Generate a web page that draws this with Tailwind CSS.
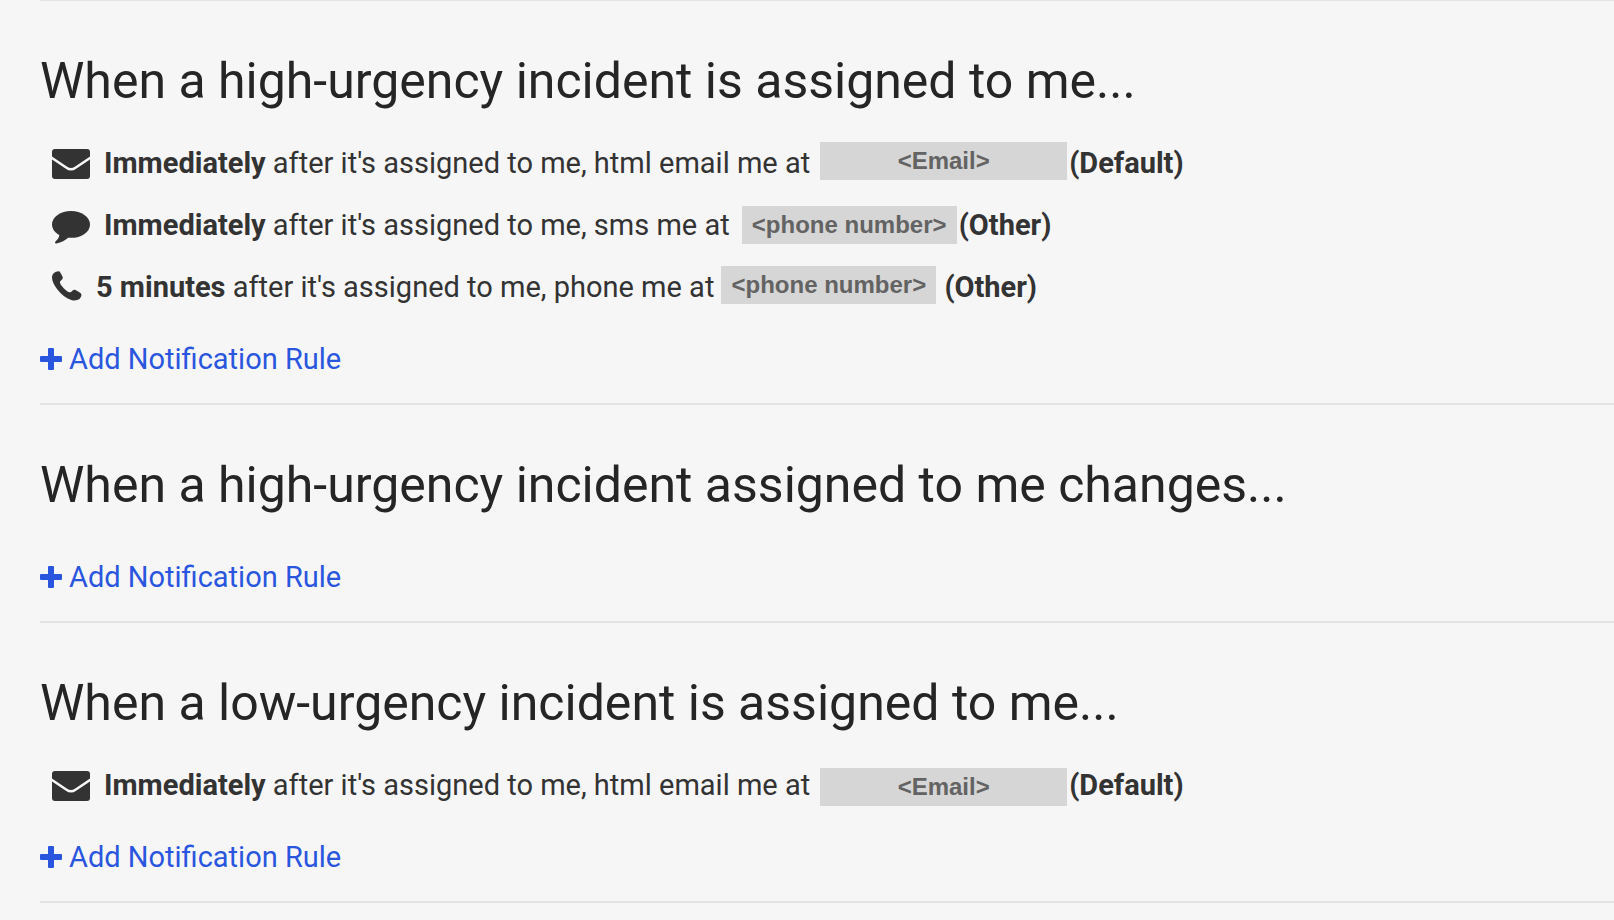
<!DOCTYPE html>
<html lang="en">
<head>
<meta charset="utf-8">
<meta name="viewport" content="width=device-width, initial-scale=1">
<title>Notification Rules</title>
<script src="https://cdn.jsdelivr.net/npm/@tailwindcss/browser@4"></script>
</head>
<body class="bg-[#f6f6f6] font-['Roboto',sans-serif] text-[29px] text-[#333333]">
<svg class="hidden" aria-hidden="true">
  <symbol id="envelope" viewBox="0 0 38 30">
    <rect width="38" height="30" rx="3" fill="currentColor"/>
    <path d="M-2 7.600 14.500 18.700Q19 22 23.500 18.700L40 7.600" fill="none" stroke="#f6f6f6" stroke-width="2.400"/>
  </symbol>
  <symbol id="comment" viewBox="0 0 38 33">
    <ellipse cx="19" cy="13.4" rx="19" ry="13.4" fill="currentColor"/>
    <path d="M7.5 23.5C7.2 26.8 5.200 29 3.300 30.800C2.700 31.800 3.200 32.600 4.300 32.400C9.500 31.500 13 29.300 16.500 26.500Z" fill="currentColor"/>
  </symbol>
  <symbol id="phone" viewBox="0 0 30 30">
    <path d="M1.500 2.500C3 .8 5.500 0 7.300.2C8.500 1.500 10 4.500 10.800 6.200C11 7.500 10 8.600 8 10.500C7.500 12 9 14.500 12 17.500C15 20.500 17.500 21.700 18.500 21.300C20.500 20 21 18.500 23 18.800C25.500 20 28 21.500 29.300 23C29.800 24.500 28.800 26.500 27.500 28C25.500 29.300 23 29.800 20 29.200C14 27.500 9 23.500 5 18C2 14 0 10 0 6.500C0 5 .6 3.500 1.500 2.500Z" fill="currentColor"/>
  </symbol>
  <symbol id="plus" viewBox="0 0 22 22">
    <path d="M9 0h4a1 1 0 0 1 1 1v7h7a1 1 0 0 1 1 1v4a1 1 0 0 1-1 1h-7v7a1 1 0 0 1-1 1H9a1 1 0 0 1-1-1v-7H1a1 1 0 0 1-1-1V9a1 1 0 0 1 1-1h7V1a1 1 0 0 1 1-1z" fill="currentColor"/>
  </symbol>
</svg>

<main class="-mt-px ml-10 border-t-2 border-[#e3e3e3] whitespace-nowrap">
  <section class="border-b-2 border-[#e3e3e3] pt-[50px] pb-[23px]">
    <h2 class="mb-[21px] text-[50px] leading-[60px] text-[#252525]">When a high-urgency incident is assigned to me...</h2>
    <ul class="mb-5 pl-3 leading-[62px]">
      <li class="flex h-[62px] items-center">
        <svg class="mt-0.5 mr-3.5 h-[30px] w-[38px]"><use href="#envelope"/></svg>
        <p><b>Immediately</b> after it's assigned to me, html email me at</p>
        <b class="mb-1 ml-2.5 w-[247px] bg-[#d6d6d6] text-center font-['Liberation_Sans',sans-serif] text-[24px] leading-[38px] text-[#636363]">&lt;Email&gt;</b>
        <b class="ml-0.5">(Default)</b>
      </li>
      <li class="flex h-[62px] items-center">
        <svg class="mt-1 mr-3.5 h-[33px] w-[38px]"><use href="#comment"/></svg>
        <p><b>Immediately</b> after it's assigned to me, sms me at</p>
        <b class="ml-3 w-[215px] bg-[#d6d6d6] text-center font-['Liberation_Sans',sans-serif] text-[24px] leading-[38px] text-[#636363]">&lt;phone number&gt;</b>
        <b class="ml-0.5">(Other)</b>
      </li>
      <li class="flex h-[62px] items-center">
        <svg class="mr-3.5 mb-0.5 h-[30px] w-[30px]"><use href="#phone"/></svg>
        <p><b>5 minutes</b> after it's assigned to me, phone me at</p>
        <b class="mb-1 ml-[7px] w-[215px] bg-[#d6d6d6] text-center font-['Liberation_Sans',sans-serif] text-[24px] leading-[38px] text-[#636363]">&lt;phone number&gt;</b>
        <b class="ml-2">(Other)</b>
      </li>
    </ul>
    <a href="#" class="flex w-fit items-center gap-[7px] leading-[42px] text-[#2a56df]"><svg class="h-[22px] w-[22px]"><use href="#plus"/></svg>Add Notification Rule</a>
  </section>

  <section class="border-b-2 border-[#e3e3e3] pt-[50px] pb-[23px]">
    <h2 class="mb-[41px] text-[50px] leading-[60px] text-[#252525]">When a high-urgency incident assigned to me changes...</h2>
    <a href="#" class="flex w-fit items-center gap-[7px] leading-[42px] text-[#2a56df]"><svg class="h-[22px] w-[22px]"><use href="#plus"/></svg>Add Notification Rule</a>
  </section>

  <section class="border-b-2 border-[#e3e3e3] pt-[50px] pb-[23px]">
    <h2 class="mb-[21px] text-[50px] leading-[60px] text-[#252525]">When a low-urgency incident is assigned to me...</h2>
    <ul class="mb-5 pl-3 leading-[62px]">
      <li class="flex h-[62px] items-center">
        <svg class="mt-0.5 mr-3.5 h-[30px] w-[38px]"><use href="#envelope"/></svg>
        <p><b>Immediately</b> after it's assigned to me, html email me at</p>
        <b class="mt-1 ml-2.5 w-[247px] bg-[#d6d6d6] text-center font-['Liberation_Sans',sans-serif] text-[24px] leading-[38px] text-[#636363]">&lt;Email&gt;</b>
        <b class="ml-0.5">(Default)</b>
      </li>
    </ul>
    <a href="#" class="flex w-fit items-center gap-[7px] leading-[42px] text-[#2a56df]"><svg class="h-[22px] w-[22px]"><use href="#plus"/></svg>Add Notification Rule</a>
  </section>
</main>
</body>
</html>
